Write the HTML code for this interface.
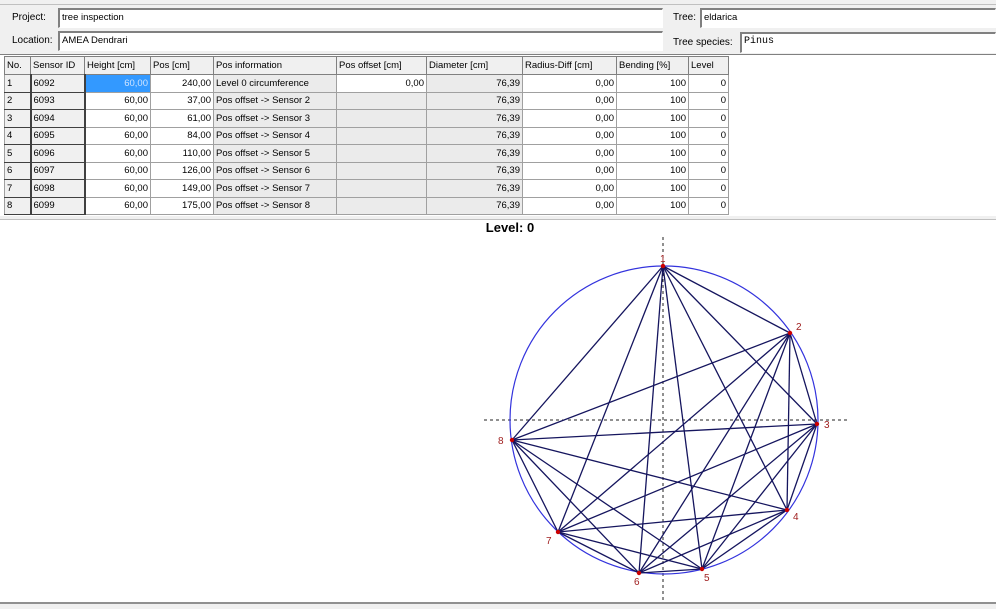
<!DOCTYPE html>
<html><head><meta charset="utf-8"><style>
*{margin:0;padding:0;box-sizing:border-box}
body{width:996px;height:609px;background:#f0f0f0;font-family:"Liberation Sans",Arial,sans-serif;font-size:10px;color:#000;position:relative;overflow:hidden}
.a{position:absolute}
.inp{position:absolute;background:#fff;border-top:2px solid #808080;border-left:2px solid #808080;border-bottom:1px solid #fff;border-right:1px solid #fff;padding:1px 2px;font-size:9.5px;line-height:14px}
table{position:absolute;left:4px;top:56px;border-collapse:collapse;font-size:9.5px}
td{height:17.5px;border:1px solid #a0a0a0;padding:0 2px;white-space:nowrap;line-height:15px}
th{height:18px;border:1px solid #808080;font-weight:normal;text-align:left;padding:0 2px;background:#f0f0f0}
.fx{background:#f0f0f0;border-right:2px solid #404040;border-bottom:1px solid #404040}
.r{text-align:right}
.g{background:#ebebeb}
</style></head><body>
<div class="a" style="left:0;top:0;width:996px;height:5px;border-bottom:1px solid #c0c0c0"></div>
<div class="a" style="left:12px;top:12px">Project:</div>
<div class="inp" style="left:58px;top:8px;width:605px;height:20px">tree inspection</div>
<div class="a" style="left:12px;top:35px">Location:</div>
<div class="inp" style="left:58px;top:31px;width:605px;height:20px">AMEA Dendrari</div>
<div class="a" style="left:673px;top:12px">Tree:</div>
<div class="inp" style="left:700px;top:8px;width:296px;height:20px">eldarica</div>
<div class="a" style="left:673px;top:37px">Tree species:</div>
<div class="inp" style="left:740px;top:32px;width:256px;height:21px;font-family:'Liberation Mono',monospace;font-size:10px">Pinus</div>
<div class="a" style="left:0;top:54px;width:996px;height:162px;background:#fff;border-top:1px solid #808080"></div>
<table>
<tr><th style="width:26px">No.</th><th style="width:54px">Sensor ID</th><th style="width:66px">Height [cm]</th><th style="width:63px">Pos [cm]</th><th style="width:123px">Pos information</th><th style="width:90px">Pos offset [cm]</th><th style="width:96px">Diameter [cm]</th><th style="width:94px">Radius-Diff [cm]</th><th style="width:72px">Bending [%]</th><th style="width:40px">Level</th></tr>
<tr><td class="fx">1</td><td class="fx">6092</td><td class="r" style="background:#3399ff;color:#cfe4ff">60,00</td><td class="r">240,00</td><td class="g">Level 0 circumference</td><td class="r">0,00</td><td class="r g">76,39</td><td class="r">0,00</td><td class="r">100</td><td class="r">0</td></tr>
<tr><td class="fx">2</td><td class="fx">6093</td><td class="r">60,00</td><td class="r">37,00</td><td class="g">Pos offset -&gt; Sensor 2</td><td class="g"></td><td class="r g">76,39</td><td class="r">0,00</td><td class="r">100</td><td class="r">0</td></tr>
<tr><td class="fx">3</td><td class="fx">6094</td><td class="r">60,00</td><td class="r">61,00</td><td class="g">Pos offset -&gt; Sensor 3</td><td class="g"></td><td class="r g">76,39</td><td class="r">0,00</td><td class="r">100</td><td class="r">0</td></tr>
<tr><td class="fx">4</td><td class="fx">6095</td><td class="r">60,00</td><td class="r">84,00</td><td class="g">Pos offset -&gt; Sensor 4</td><td class="g"></td><td class="r g">76,39</td><td class="r">0,00</td><td class="r">100</td><td class="r">0</td></tr>
<tr><td class="fx">5</td><td class="fx">6096</td><td class="r">60,00</td><td class="r">110,00</td><td class="g">Pos offset -&gt; Sensor 5</td><td class="g"></td><td class="r g">76,39</td><td class="r">0,00</td><td class="r">100</td><td class="r">0</td></tr>
<tr><td class="fx">6</td><td class="fx">6097</td><td class="r">60,00</td><td class="r">126,00</td><td class="g">Pos offset -&gt; Sensor 6</td><td class="g"></td><td class="r g">76,39</td><td class="r">0,00</td><td class="r">100</td><td class="r">0</td></tr>
<tr><td class="fx">7</td><td class="fx">6098</td><td class="r">60,00</td><td class="r">149,00</td><td class="g">Pos offset -&gt; Sensor 7</td><td class="g"></td><td class="r g">76,39</td><td class="r">0,00</td><td class="r">100</td><td class="r">0</td></tr>
<tr><td class="fx">8</td><td class="fx">6099</td><td class="r">60,00</td><td class="r">175,00</td><td class="g">Pos offset -&gt; Sensor 8</td><td class="g"></td><td class="r g">76,39</td><td class="r">0,00</td><td class="r">100</td><td class="r">0</td></tr>
</table>
<div class="a" style="left:0;top:219px;width:996px;height:385px;background:#fff;border-top:1px solid #c0c0c0;border-bottom:2px solid #909090"></div>
<svg class="a" style="left:0;top:0" width="996" height="609">
<text x="510" y="232" font-family="Liberation Sans" font-weight="bold" font-size="13" text-anchor="middle">Level: 0</text>
<g stroke="#222" stroke-width="1" stroke-dasharray="3,3"><line x1="484" y1="420" x2="848" y2="420"/><line x1="663" y1="237" x2="663" y2="600"/></g>
<circle cx="664" cy="420" r="154" fill="none" stroke="#3333dd" stroke-width="1.2"/>
<g stroke="#15155e" stroke-width="1.3">
<line x1="663" y1="266" x2="790" y2="333"/><line x1="663" y1="266" x2="817" y2="424"/><line x1="663" y1="266" x2="787" y2="510"/><line x1="663" y1="266" x2="702" y2="569"/><line x1="663" y1="266" x2="639" y2="573"/><line x1="663" y1="266" x2="558" y2="532"/><line x1="663" y1="266" x2="512" y2="440"/>
<line x1="790" y1="333" x2="817" y2="424"/><line x1="790" y1="333" x2="787" y2="510"/><line x1="790" y1="333" x2="702" y2="569"/><line x1="790" y1="333" x2="639" y2="573"/><line x1="790" y1="333" x2="558" y2="532"/><line x1="790" y1="333" x2="512" y2="440"/>
<line x1="817" y1="424" x2="787" y2="510"/><line x1="817" y1="424" x2="702" y2="569"/><line x1="817" y1="424" x2="639" y2="573"/><line x1="817" y1="424" x2="558" y2="532"/><line x1="817" y1="424" x2="512" y2="440"/>
<line x1="787" y1="510" x2="702" y2="569"/><line x1="787" y1="510" x2="639" y2="573"/><line x1="787" y1="510" x2="558" y2="532"/><line x1="787" y1="510" x2="512" y2="440"/>
<line x1="702" y1="569" x2="639" y2="573"/><line x1="702" y1="569" x2="558" y2="532"/><line x1="702" y1="569" x2="512" y2="440"/>
<line x1="639" y1="573" x2="558" y2="532"/><line x1="639" y1="573" x2="512" y2="440"/>
<line x1="558" y1="532" x2="512" y2="440"/>
</g>
<g fill="#cc0000"><circle cx="663" cy="266" r="2.2"/><circle cx="790" cy="333" r="2.2"/><circle cx="817" cy="424" r="2.2"/><circle cx="787" cy="510" r="2.2"/><circle cx="702" cy="569" r="2.2"/><circle cx="639" cy="573" r="2.2"/><circle cx="558" cy="532" r="2.2"/><circle cx="512" cy="440" r="2.2"/></g>
<g fill="#a02020" font-family="Liberation Sans" font-size="10"><text x="660" y="262">1</text><text x="796" y="330">2</text><text x="824" y="428">3</text><text x="793" y="520">4</text><text x="704" y="581">5</text><text x="634" y="585">6</text><text x="546" y="544">7</text><text x="498" y="444">8</text></g>
</svg>
</body></html>
